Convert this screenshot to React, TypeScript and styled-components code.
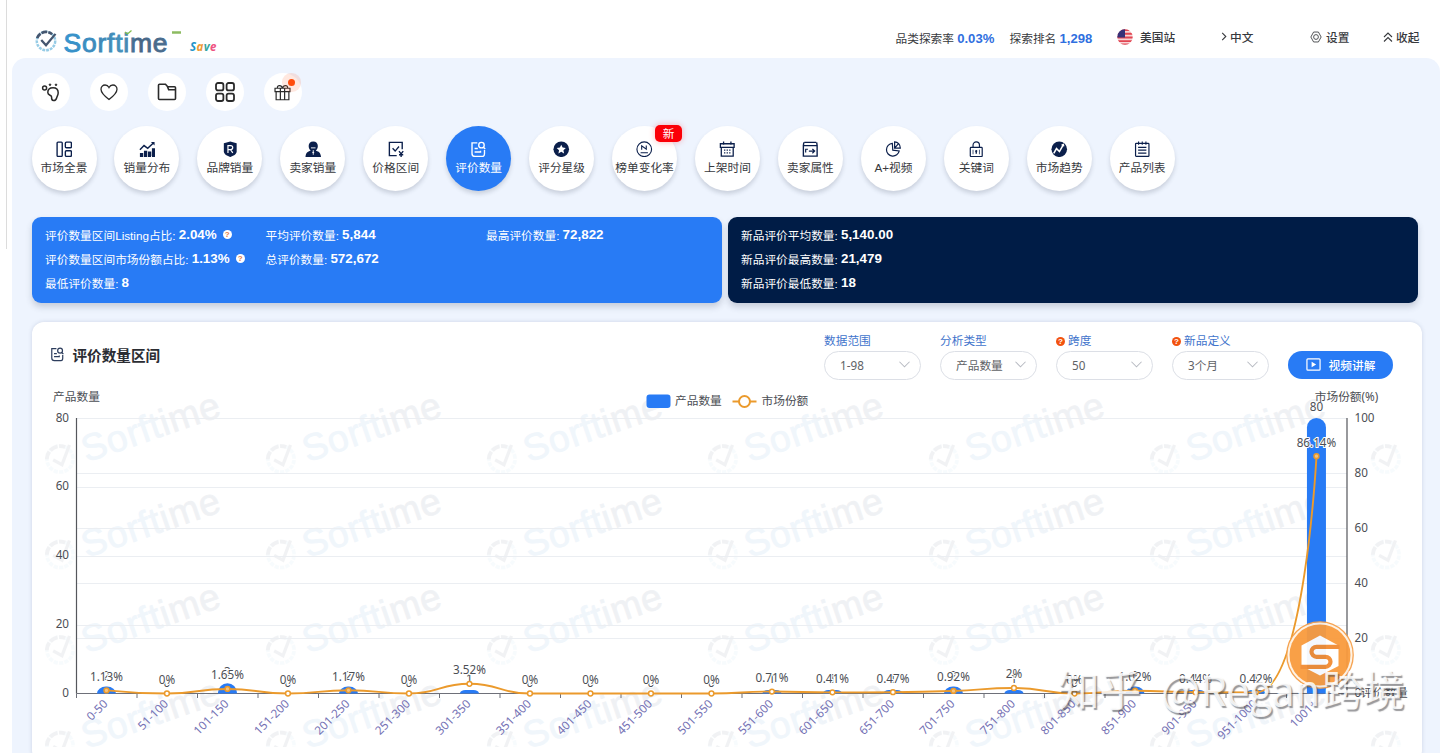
import React from "react";
import styled, { createGlobalStyle, css } from "styled-components";

const NAVY = "#0b1f4b";
const BLUE = "#287bf5";
const ORANGE = "#eb9a2c";
const CJK = `"Noto Sans CJK SC", sans-serif`;

/* ---------- icons ---------- */

type IconName =
  | "panorama"
  | "sales"
  | "brand"
  | "seller"
  | "price"
  | "review"
  | "star"
  | "change"
  | "calendar"
  | "store"
  | "pie"
  | "lock"
  | "trend"
  | "list";

const glyphs: Record<IconName, React.ReactNode> = {
  panorama: (
    <>
      <rect x="1.2" y="1.2" width="5.600" height="15.600" rx="1" />
      <rect x="10.200" y="1.200" width="6.600" height="6.200" rx="1.200" />
      <rect x="10.200" y="10.600" width="6.600" height="6.200" rx="1.200" />
    </>
  ),
  sales: (
    <>
      <path d="M1 9.500 5.500 5l4 3 6.500-6" strokeWidth="1.600" />
      <path d="M13 1h4v4z" fill="currentColor" stroke="none" />
      <path
        d="M1 13h3.600v4.500H1zM5.400 10.500h3.600v7H5.400zM9.800 11.500h3.600v6H9.800zM14.100 8h3.600v9.500h-3.600z"
        fill="currentColor"
        stroke="none"
      />
    </>
  ),
  brand: (
    <>
      <path
        d="M9 .5 2 2.500v9C2 14.500 6 16.500 9 17.500c3-1 7-3 7-6v-9z"
        fill="currentColor"
        stroke="none"
      />
      <path d="M6.500 13V5h3a2.200 2.200 0 0 1 0 4.400h-3M9.300 9.400 11.800 13" stroke="#fff" strokeWidth="1.300" />
    </>
  ),
  seller: (
    <>
      <path
        d="M9 .5c3.200 0 5 2 5 5 0 2.300-1 4-2.200 5 3.500.8 5.200 2 5.700 7H.5c.5-5 2.200-6.200 5.700-7C5 9.500 4 7.800 4 5.500c0-3 1.800-5 5-5z"
        fill="currentColor"
        stroke="none"
      />
      <path d="M6.500 7.500h5M9 10v5M8 12.500h2" stroke="#fff" strokeWidth="1" />
    </>
  ),
  price: (
    <>
      <path d="M9.500 16H1.500V1.500h14V9" />
      <path d="m5 8 2.800 3L12 6" />
      <path d="m12 11 2.300 3 2.300-3M14.300 14v4M12 15h4.600" />
    </>
  ),
  review: (
    <>
      <path d="M8 2H2.200v11.500c0 2 1.500 3.300 3.300 3.300h8.200c1.500 0 2.100-1 2.100-2.800V9.800" />
      <path d="M5 8.200h3.500M5 12h6.500v-1.500" />
      <circle cx="12.500" cy="4.500" r="3" />
      <path d="m14.600 6.800 2 2" />
    </>
  ),
  star: (
    <>
      <circle cx="9" cy="9" r="8.500" fill="currentColor" stroke="none" />
      <path
        d="m9 4 1.500 3.200 3.500.4-2.600 2.400.7 3.500L9 11.800l-3.100 1.700.7-3.500L4 7.600l3.500-.4z"
        fill="#fff"
        stroke="none"
      />
    </>
  ),
  change: (
    <>
      <circle cx="9" cy="9" r="8" strokeWidth="1.200" />
      <path d="M6.200 9.500V5.200l5 3.800V4.800M5 12.800h8" strokeWidth="1.200" />
    </>
  ),
  calendar: (
    <>
      <path d="M1.500 3h15v4h-15zM2.500 7v9.500h13V7M5 .5V4M13 .5V4" strokeWidth="1.400" />
      <path d="M5.500 10h1.400M8.300 10h1.400M11.100 10h1.400M5.500 13h1.400M8.300 13h1.400M11.100 13h1.400" />
    </>
  ),
  store: (
    <>
      <path d="M2.500 1.500h13M1.500 5h15v11.500h-15zM2 1.500 1.500 5M16 1.500l.5 3.500" />
      <path d="M3.500 9h3M4 9v3.500M7.500 11h6M11.300 8.700l2.500 2.300-2.500 2.300" strokeWidth="1.300" />
    </>
  ),
  pie: (
    <>
      <path d="M8 2.500a7 7 0 1 0 7.500 8.300L8.500 10z" strokeWidth="1.300" />
      <path d="M10.500 1v6.700h6.200C16.700 3.800 14 1 10.500 1zM10.500 7.700l4-4.500" strokeWidth="1.300" />
    </>
  ),
  lock: (
    <>
      <rect x="2.500" y="7" width="13" height="10" rx=".8" strokeWidth="1.300" />
      <path d="M5.500 7V4.500C5.500 2.500 7 1 9 1s3.500 1.500 3.500 3.500V7" strokeWidth="1.300" />
      <path d="M5.500 9.500v5M12.500 9.500v5" strokeWidth=".8" />
      <circle cx="9" cy="11" r="1.200" fill="currentColor" stroke="none" />
      <path d="M9 11v3" />
    </>
  ),
  trend: (
    <>
      <circle cx="9" cy="9" r="8.500" fill="currentColor" stroke="none" />
      <path d="m3 13.500 3-5.200 3.200 3.200 4-7M11.500 4.500l1.900-.6.400 2" stroke="#fff" strokeWidth="1.700" />
    </>
  ),
  list: (
    <>
      <rect x="1.700" y="2.500" width="14.600" height="14.300" rx=".8" strokeWidth="1.300" />
      <path d="M5 .5V4M9 .5V4M13 .5V4M4.500 7h9M4.500 10h9M4.500 13.200h9" strokeWidth="1.200" />
    </>
  ),
};

const Glyph = styled.svg<{ $size?: number }>`
  display: block;
  flex: none;
  width: ${({ $size }) => $size ?? 17}px;
  height: ${({ $size }) => $size ?? 17}px;
  fill: none;
  stroke: currentColor;
  stroke-width: 1.5;
`;

const Icon: React.FC<{ name: IconName; size?: number }> = ({ name, size }) => (
  <Glyph viewBox="0 0 18 18" $size={size}>
    {glyphs[name]}
  </Glyph>
);

/* ---------- data ---------- */

const navItems: { icon: IconName; label: string; active?: boolean; badge?: string }[] = [
  { icon: "panorama", label: "市场全景" },
  { icon: "sales", label: "销量分布" },
  { icon: "brand", label: "品牌销量" },
  { icon: "seller", label: "卖家销量" },
  { icon: "price", label: "价格区间" },
  { icon: "review", label: "评价数量", active: true },
  { icon: "star", label: "评分星级" },
  { icon: "change", label: "榜单变化率", badge: "新" },
  { icon: "calendar", label: "上架时间" },
  { icon: "store", label: "卖家属性" },
  { icon: "pie", label: "A+视频" },
  { icon: "lock", label: "关键词" },
  { icon: "trend", label: "市场趋势" },
  { icon: "list", label: "产品列表" },
];

const reviewStats = [
  { label: "评价数量区间Listing占比", value: "2.04%", help: true },
  { label: "平均评价数量", value: "5,844" },
  { label: "最高评价数量", value: "72,822" },
  { label: "评价数量区间市场份额占比", value: "1.13%", help: true },
  { label: "总评价数量", value: "572,672" },
  null,
  { label: "最低评价数量", value: "8" },
];

const newStats = [
  { label: "新品评价平均数量", value: "5,140.00" },
  { label: "新品评价最高数量", value: "21,479" },
  { label: "新品评价最低数量", value: "18" },
];

const filters = [
  { label: "数据范围", value: "1-98" },
  { label: "分析类型", value: "产品数量" },
  { label: "跨度", value: "50", help: true },
  { label: "新品定义", value: "3个月", help: true },
];

// [range, products, market share %]
const ranges: [string, number, number][] = [
  ["0-50", 2, 1.13],
  ["51-100", 0, 0],
  ["101-150", 3, 1.65],
  ["151-200", 0, 0],
  ["201-250", 2, 1.17],
  ["251-300", 0, 0],
  ["301-350", 1, 3.52],
  ["351-400", 0, 0],
  ["401-450", 0, 0],
  ["451-500", 0, 0],
  ["501-550", 0, 0],
  ["551-600", 1, 0.71],
  ["601-650", 1, 0.41],
  ["651-700", 1, 0.47],
  ["701-750", 2, 0.92],
  ["751-800", 1, 2],
  ["801-850", 0, 0],
  ["851-900", 2, 1.02],
  ["901-950", 1, 0.44],
  ["951-1000", 1, 0.42],
  ["1001+", 80, 86.14],
];

/* ---------- chart ---------- */

const LEFT = 76.5;
const RIGHT = 1347;
const TOP = 418;
const BOTTOM = 693.5;
const STEP = (RIGHT - LEFT) / ranges.length;

const xAt = (i: number) => LEFT + STEP * (i + 0.5) - 0.3;
const yCount = (v: number) => BOTTOM - (v / 80) * (BOTTOM - TOP);
const yShare = (v: number) => BOTTOM - (v / 100) * (BOTTOM - TOP);

type Pt = [number, number];

const between = (v: number, a: number, b: number) =>
  Math.max(Math.min(a, b), Math.min(Math.max(a, b), v));

// smooth curve whose control points never leave the neighbouring values
const smoothPath = (pts: Pt[]) => {
  const before: Pt[] = pts.map((p) => [...p] as Pt);
  const after: Pt[] = pts.map((p) => [...p] as Pt);
  for (let i = 1; i < pts.length - 1; i++) {
    const [p, c, n] = [pts[i - 1], pts[i], pts[i + 1]];
    const lp = Math.hypot(c[0] - p[0], c[1] - p[1]);
    const ln = Math.hypot(n[0] - c[0], n[1] - c[1]);
    const k = 0.5 * (ln / (lp + ln));
    for (const d of [0, 1]) {
      const next = between(c[d] + (n[d] - p[d]) * k, c[d], n[d]);
      before[i][d] = between(c[d] - ((next - c[d]) * lp) / ln, c[d], p[d]);
      after[i][d] = between(c[d] + ((c[d] - before[i][d]) * ln) / lp, c[d], n[d]);
    }
  }
  return pts
    .map((p, i) => (i ? `C${after[i - 1]} ${before[i]} ${p}` : `M${p}`))
    .join(" ");
};

const barPath = (x: number, v: number) => {
  const y = yCount(v);
  const h = BOTTOM - y;
  const ry = Math.min(9.5, h);
  const rx = Math.min(9.5, h + 2);
  return `M${x - 9.5} ${BOTTOM}V${y + ry}a${rx} ${ry} 0 0 1 ${rx} ${-ry}H${
    x + 9.5 - rx
  }a${rx} ${ry} 0 0 1 ${rx} ${ry}V${BOTTOM}z`;
};

const Mark: React.FC = () => (
  <>
    <circle r="9.700" fill="none" stroke="#5fb0d8" strokeWidth="2.600" strokeDasharray="3 1" opacity=".65" />
    <path d="M-9.300-3A10 10 0 0 1 6.500-7.200" fill="none" stroke="#45566f" strokeWidth="2.800" strokeDasharray="6 1.200" />
    <path d="M-5-1 0 4.500 10-7.500" fill="none" stroke="#45566f" strokeWidth="2.400" />
  </>
);

const Chart: React.FC = () => (
  <ChartSvg viewBox="32 386 1390 367">
    <defs>
      <clipPath id="wmArea">
        <rect x="45" y="390" width="1368" height="357" />
      </clipPath>
      <linearGradient id="wmInk" x1="0" x2="1">
        <stop offset="0" stopColor="#8fbce6" />
        <stop offset=".5" stopColor="#8fbce6" />
        <stop offset=".65" stopColor="#8d9bb0" />
      </linearGradient>
    </defs>

    <g clipPath="url(#wmArea)">
      {[0, 1, 2, 3].map((r) =>
        [0, 1, 2, 3, 4, 5, 6].map((c) => (
          <g
            key={`${r}-${c}`}
            transform={`translate(${60 + c * 221} ${459 + r * 95.5}) rotate(-19)`}
          >
            <g transform="scale(1.350)" opacity=".07">
              <Mark />
            </g>
            {c < 6 && (
              <text
                x="24"
                y="12"
                textLength="144"
                fontSize="37.500"
                fill="url(#wmInk)"
                stroke="url(#wmInk)"
                strokeWidth=".8"
                opacity=".13"
                fontFamily="Liberation Sans"
              >
                Sorftime
              </text>
            )}
          </g>
        ))
      )}
    </g>

    <g stroke="#ebeef2" strokeWidth="1">
      {[20, 40, 60, 80].map((v) => (
        <path key={v} d={`M${LEFT} ${Math.round(yCount(v)) + 0.5}H${RIGHT}`} />
      ))}
      {[20, 40, 60, 80].map((v) => (
        <path key={v} d={`M${LEFT} ${Math.round(yShare(v)) + 0.5}H${RIGHT}`} />
      ))}
    </g>

    <g stroke="#6e7079" fill="none">
      <path d={`M${LEFT} ${TOP}V${BOTTOM}M${RIGHT} ${TOP}V${BOTTOM}`} stroke="#55575c" strokeWidth="1.200" />
      <path d={`M${LEFT} ${BOTTOM}H${RIGHT}`} />
      {[...ranges, null].map((_, i) => (
        <path key={i} d={`M${LEFT + STEP * i} ${BOTTOM}v4.500`} />
      ))}
    </g>

    {ranges.map(([name, count], i) =>
      count ? <path key={name} d={barPath(xAt(i), count)} fill={BLUE} /> : null
    )}

    <g textAnchor="middle" stroke="#fff" strokeWidth="2" paintOrder="stroke">
      {ranges.map(([name, count], i) => (
        <text key={name} x={xAt(i)} y={yCount(count) - 7}>
          {count}
        </text>
      ))}
    </g>

    <path
      d={smoothPath(ranges.map(([, , share], i) => [xAt(i), yShare(share)] as Pt))}
      fill="none"
      stroke={ORANGE}
      strokeWidth="1.900"
    />
    {ranges.map(([name, count, share], i) => (
      <circle
        key={name}
        cx={xAt(i)}
        cy={yShare(share)}
        r="2.400"
        fill={count > 1 ? "#f3c27f" : "#fff"}
        stroke={ORANGE}
        strokeWidth="1.500"
      />
    ))}
    <g textAnchor="middle" stroke="#fff" strokeWidth="2" paintOrder="stroke">
      {ranges.map(([name, , share], i) => (
        <text key={name} x={xAt(i)} y={yShare(share) - 9.5}>
          {share}%
        </text>
      ))}
    </g>

    <g textAnchor="end">
      {[0, 20, 40, 60, 80].map((v) => (
        <text key={v} x="69" y={yCount(v) + 3.5}>
          {v}
        </text>
      ))}
    </g>
    {[0, 20, 40, 60, 80, 100].map((v) => (
      <text key={v} x="1354.500" y={yShare(v) + 3.5}>
        {v}
      </text>
    ))}
    <text x="76.500" y="401" textAnchor="middle">
      产品数量
    </text>
    <text x="1346.500" y="401" textAnchor="middle">
      市场份额(%)
    </text>
    <text x="1361" y="697">
      评价数量
    </text>

    <g textAnchor="end" fill="#7471b4">
      {ranges.map(([name], i) => (
        <text key={name} transform={`translate(${xAt(i) + 2} 704.500) rotate(-45)`}>
          {name}
        </text>
      ))}
    </g>

    <rect x="646.500" y="394.500" width="24" height="13.500" rx="3" fill={BLUE} />
    <text x="675" y="405">
      产品数量
    </text>
    <path d="M732.500 401.500h24" stroke={ORANGE} strokeWidth="2" />
    <circle cx="744.500" cy="401.500" r="5.500" fill="#fff" stroke={ORANGE} strokeWidth="2" />
    <text x="761.500" y="405">
      市场份额
    </text>
  </ChartSvg>
);

const ChartSvg = styled.svg`
  display: block;
  width: 1390px;
  height: 367px;
  font-family: "Noto Sans", ${CJK};
  font-size: 11.7px;
  fill: #4b4e54;
`;

/* ---------- header ---------- */

const Header: React.FC = () => (
  <HeaderBar>
    <Logo viewBox="0 0 190 40">
      <defs>
        <linearGradient id="ink" x1="0" x2="1">
          <stop offset="0" stopColor="#3595cf" />
          <stop offset=".35" stopColor="#3f88b8" />
          <stop offset=".58" stopColor="#4693bd" />
          <stop offset=".7" stopColor="#456585" />
          <stop offset="1" stopColor="#4a6e90" />
        </linearGradient>
      </defs>
      <g transform="translate(11 21) scale(.95)">
        <Mark />
      </g>
      <text
        x="28.500"
        y="31.500"
        textLength="104"
        fontSize="26.500"
        fill="url(#ink)"
        stroke="url(#ink)"
        strokeWidth=".9"
        fontFamily="Liberation Sans"
      >
        Sorftime
      </text>
      <path d="m90 12 2.500 2 4-3.500" fill="none" stroke="#84bd4c" strokeWidth="1.300" />
      <path d="M137 12.500h9" stroke="#8cbb61" strokeWidth="2.500" />
      <text x="155" y="31" textLength="26.500" fontSize="11.500" fontWeight="700" fontStyle="italic" fontFamily="Noto Sans">
        <tspan fill="#2194c9">S</tspan>
        <tspan fill="#ef9a36">a</tspan>
        <tspan fill="#35a6a0">v</tspan>
        <tspan fill="#ee5382">e</tspan>
      </text>
    </Logo>
    <HeaderTools>
      <Exploration>
        品类探索率 <Metric>0.03%</Metric>
      </Exploration>
      <Exploration>
        探索排名 <Metric>1,298</Metric>
      </Exploration>
      <Tool $gap={7}>
        <Glyph viewBox="0 0 16 16" $size={16}>
          <clipPath id="flag">
            <circle cx="8" cy="8" r="7.700" />
          </clipPath>
          <g clipPath="url(#flag)" stroke="none">
            <path d="M0 0h16v16H0z" fill="#f6d5d7" />
            <path d="M0 0h16v2H0zM0 3.800h16v1.900H0zM0 7.500h16v1.900H0zM0 11.200h16v1.800H0zM0 14.500h16V16H0z" fill="#e24552" />
            <path d="M0 0h8v8.500H0z" fill="#363078" />
          </g>
        </Glyph>
        美国站
      </Tool>
      <Tool $gap={3}>
        <Caret viewBox="0 0 6 10">
          <path d="m1 1 4 4-4 4" />
        </Caret>
        中文
      </Tool>
      <Tool $gap={4}>
        <Glyph viewBox="0 0 14 14" $size={12}>
          <path d="M4.200 1.200h5.600L13 7l-3.200 5.800H4.200L1 7z" strokeWidth="1" />
          <circle cx="7" cy="7" r="2.800" strokeWidth="1" />
        </Glyph>
        设置
      </Tool>
      <Tool $gap={3}>
        <Glyph viewBox="0 0 10 10" $size={10}>
          <path d="m1 5 4-4 4 4M1 9.500l4-4 4 4" strokeWidth="1.100" />
        </Glyph>
        收起
      </Tool>
    </HeaderTools>
  </HeaderBar>
);

const Chevron: React.FC = () => (
  <Glyph viewBox="0 0 12 12" $size={11}>
    <path d="m.5 3 5.500 5.500L11.500 3" stroke="#b7bac2" strokeWidth="1.100" />
  </Glyph>
);

/* ---------- page ---------- */

const App: React.FC = () => (
  <>
    <GlobalStyle />
    <Page>
      <Rail />
      <Main>
        <Header />
        <Content>
          <QuickRow>
            <QuickButton>
              <Glyph viewBox="0 0 20 20" $size={20}>
                <circle cx="3.600" cy="6" r="2" />
                <circle cx="9" cy="2.700" r=".8" fill="currentColor" strokeWidth="1" />
                <circle cx="15" cy="2.800" r=".8" fill="currentColor" strokeWidth="1" />
                <path d="M6.800 10.500c0-3 2.200-4.800 5.200-4.800 3.300 0 5.200 2 5.200 5 0 2.500-1 3.300-1.500 5-.5 1.800-1.500 3-3.300 2.800-2.200-.3-1.800-2.200-1.800-3.600 0-2-3.800-1.400-3.800-4.400z" />
              </Glyph>
            </QuickButton>
            <QuickButton>
              <Glyph viewBox="0 0 20 20" $size={20}>
                <path d="M10 17.500C6 14.500 2 11 2 7.300 2 4.700 3.900 3 6.100 3 7.700 3 9.200 4 10 5.500 10.800 4 12.300 3 13.900 3 16.100 3 18 4.700 18 7.300c0 3.700-4 7.200-8 10.200z" strokeWidth="1.300" />
              </Glyph>
            </QuickButton>
            <QuickButton>
              <Glyph viewBox="0 0 20 20" $size={20}>
                <path d="M1.500 3.200c0-.6.400-1 1-1h6l2.200 2.600h6.800c.6 0 1 .4 1 1v10.700c0 .6-.4 1-1 1h-15c-.6 0-1-.4-1-1zM10.500 4.800l1.200 3h6.500" strokeWidth="1.600" />
              </Glyph>
            </QuickButton>
            <QuickButton>
              <Glyph viewBox="0 0 20 20" $size={20}>
                <g strokeWidth="1.800">
                  <rect x="1" y="1" width="7.400" height="7.400" rx="2" />
                  <rect x="11.600" y="1" width="7.400" height="7.400" rx="2" />
                  <rect x="1" y="11.600" width="7.400" height="7.400" rx="2" />
                  <rect x="11.600" y="11.600" width="7.400" height="7.400" rx="2" />
                </g>
              </Glyph>
            </QuickButton>
            <QuickButton>
              <Glyph viewBox="0 0 20 20" $size={17}>
                <path d="M1.200 5h17.600v4H1.200zM2.500 9v9.500h15V9M7.500 5v13.500M12.500 5v13.500M10 5C9 1 3.500.5 4 5M10 5c1-4 6.500-4.500 6 0" strokeWidth="1.400" />
              </Glyph>
              <Dot />
            </QuickButton>
          </QuickRow>

          <NavRow>
            {navItems.map((item) => (
              <NavItem key={item.label} $active={item.active}>
                <Icon name={item.icon} size={16.5} />
                {item.label}
                {item.badge && <NewBadge>{item.badge}</NewBadge>}
              </NavItem>
            ))}
          </NavRow>

          <StatsRow>
            <StatsPanel $color={BLUE} $columns={3}>
              {reviewStats.map((stat, i) => (
                <Stat key={i}>
                  {stat && (
                    <>
                      {stat.label}: <b>{stat.value}</b>
                      {stat.help && <Help $light>?</Help>}
                    </>
                  )}
                </Stat>
              ))}
            </StatsPanel>
            <StatsPanel $color="#001c46" $columns={1}>
              {newStats.map((stat) => (
                <Stat key={stat.label}>
                  {stat.label}: <b>{stat.value}</b>
                </Stat>
              ))}
            </StatsPanel>
          </StatsRow>

          <Card>
            <CardHeader>
              <CardTitle>
                <Icon name="review" size={14.5} />
                评价数量区间
              </CardTitle>
              <Filters>
                {filters.map((filter) => (
                  <Filter key={filter.label}>
                    <FilterLabel>
                      {filter.help && <Help>?</Help>}
                      {filter.label}
                    </FilterLabel>
                    <SelectBox>
                      {filter.value}
                      <Chevron />
                    </SelectBox>
                  </Filter>
                ))}
                <VideoButton>
                  <Glyph viewBox="0 0 16 14" $size={15}>
                    <rect x="1" y="1" width="14" height="12" rx="1" strokeWidth="1.300" />
                    <path d="m6 4 4.800 3L6 10z" fill="#fff" stroke="none" />
                  </Glyph>
                  视频讲解
                </VideoButton>
              </Filters>
            </CardHeader>
            <Chart />
          </Card>
        </Content>
      </Main>

      <FloatingLogo viewBox="-36 -36 72 72">
        <circle r="33.200" fill="#fff3e4" stroke="#f6a04b" strokeWidth="1.300" />
        <circle r="30.500" fill="#f99b3e" />
        <path d="M0-19.500 18.500-9.500v20.500L0 20.500-18.500 11V-9.500z" fill="#fff" />
        <path
          d="M19.500-8.200H-3.500a5 5 0 0 0 0 10H5.500a5 5 0 0 1 0 10H-19.500"
          fill="none"
          stroke="#f28c33"
          strokeWidth="4.200"
        />
      </FloatingLogo>
      <Watermark>
        <span>知乎</span>
        <span>@Regan</span>
        <span>跨境</span>
      </Watermark>
    </Page>
  </>
);

const GlobalStyle = createGlobalStyle`
  body {
    margin: 0;
    overflow: hidden;
    background: #fff;
  }

  * {
    box-sizing: border-box;
  }
`;

const Page = styled.div`
  position: relative;
  display: flex;
  width: 1440px;
  height: 753px;
  overflow: hidden;
  font-family: "Liberation Sans", ${CJK};
  font-size: 11.7px;
  color: #37393d;
`;

const Rail = styled.div`
  width: 7px;
  height: 249px;
  margin-right: 5px;
  border-right: 1px solid #dcdcdc;
`;

const Main = styled.div`
  flex: 1;
  display: flex;
  flex-direction: column;
`;

const HeaderBar = styled.header`
  display: flex;
  justify-content: space-between;
  height: 58px;
  padding: 20px 0 0 23px;
`;

const Logo = styled.svg`
  width: 190px;
  height: 40px;
`;

const HeaderTools = styled.div`
  display: grid;
  grid-template-columns: 114px 107px 104px 89px 73px 57px;
  height: 33px;
  align-items: center;
  white-space: nowrap;
`;

const Exploration = styled.span`
  margin-left: -0.5px;
  padding-top: 1px;
`;

const Metric = styled.b`
  font-size: 13.1px;
  color: #2f6fe0;
`;

const Tool = styled.div<{ $gap: number }>`
  display: flex;
  align-items: center;
  gap: ${({ $gap }) => $gap}px;
  font-weight: 500;
`;

const Caret = styled.svg`
  width: 6px;
  height: 9px;
  fill: none;
  stroke: currentColor;
  stroke-width: 1.2;
`;

const Content = styled.main`
  flex: 1;
  padding: 15px 18px 0 20px;
  background: #eef4fe;
  border-radius: 14px 14px 0 0;
`;

const QuickRow = styled.div`
  display: flex;
  gap: 20px;
  margin-left: -0.5px;
`;

const QuickButton = styled.div`
  position: relative;
  display: flex;
  align-items: center;
  justify-content: center;
  width: 38px;
  height: 38px;
  border-radius: 50%;
  background: #fff;
  color: #2a2a2a;
`;

const Dot = styled.span`
  position: absolute;
  top: 6px;
  left: 24px;
  width: 7px;
  height: 7px;
  border-radius: 50%;
  background: #ff4d0d;
  box-shadow: 0 0 0 6px rgba(255, 100, 50, 0.15);
`;

const NavRow = styled.nav`
  display: flex;
  gap: 17.95px;
  margin: 15px 0 0 -0.5px;
`;

const NavItem = styled.div<{ $active?: boolean }>`
  position: relative;
  display: flex;
  flex-direction: column;
  align-items: center;
  gap: 2px;
  width: 65px;
  height: 65px;
  padding-top: 14.5px;
  border-radius: 50%;
  background: #fff;
  box-shadow: 0 3px 4px rgba(60, 70, 90, 0.2);
  line-height: 17px;
  white-space: nowrap;

  svg {
    color: ${NAVY};
  }

  ${({ $active }) =>
    $active &&
    css`
      background: ${BLUE};
      color: #fff;

      svg {
        color: #fff;
      }
    `}
`;

const NewBadge = styled.span`
  position: absolute;
  top: -1px;
  left: 43px;
  width: 27px;
  height: 17px;
  border-radius: 5px;
  background: #fb0007;
  box-shadow: 0 0 6px rgba(255, 0, 0, 0.3);
  color: #fff;
  text-align: center;
`;

const StatsRow = styled.div`
  display: flex;
  gap: 6px;
  margin-top: 26px;
`;

const StatsPanel = styled.section<{ $color: string; $columns: number }>`
  display: grid;
  grid-template-columns: repeat(${({ $columns }) => $columns}, 220.5px);
  grid-auto-rows: 23.7px;
  width: 690px;
  height: 86px;
  padding: 6px 13px;
  border-radius: 9px;
  background: ${({ $color }) => $color};
  box-shadow: 0 4px 6px rgba(60, 70, 90, 0.22);
  color: #fff;
`;

const Stat = styled.div`
  display: flex;
  align-items: center;
  white-space: nowrap;

  b {
    margin-left: 3.2px;
    font-size: 13.4px;
  }
`;

const Help = styled.span<{ $light?: boolean }>`
  display: inline-flex;
  align-items: center;
  justify-content: center;
  width: 9px;
  height: 9px;
  margin: ${({ $light }) => ($light ? "0 0 0 6px" : "0 3px 0 0")};
  border-radius: 50%;
  background: ${({ $light }) => ($light ? "#fff" : "#f2520f")};
  color: ${({ $light }) => ($light ? "#e07a45" : "#fff")};
  font-size: 8px;
  font-weight: 700;
  line-height: 9px;
`;

const Card = styled.section`
  width: 1390px;
  height: 440px;
  margin-top: 19px;
  border-radius: 12px;
  background: #fff;
  box-shadow: 0 0 4px rgba(60, 80, 120, 0.18);
`;

const CardHeader = styled.div`
  display: flex;
  justify-content: space-between;
  height: 64px;
  padding: 9px 29px 0 18px;
`;

const CardTitle = styled.h2`
  display: flex;
  align-items: center;
  gap: 8px;
  height: 47px;
  margin: 0;
  font-size: 14.6px;
  font-weight: 700;
  color: #2b2d33;

  svg {
    color: #2d3d5d;
  }
`;

const Filters = styled.div`
  display: flex;
  align-items: flex-start;
  gap: 19px;
`;

const Filter = styled.div`
  width: 97px;
`;

const FilterLabel = styled.div`
  display: flex;
  align-items: center;
  height: 20px;
  line-height: 20px;
  color: #3f74cc;
`;

const SelectBox = styled.div`
  display: flex;
  align-items: center;
  justify-content: space-between;
  height: 29px;
  padding: 0 10px 2px 15px;
  border: 1px solid #dcdfe6;
  border-radius: 15px;
  font-family: "Noto Sans", ${CJK};
  color: #606266;
`;

const VideoButton = styled.button`
  display: flex;
  align-items: center;
  justify-content: center;
  gap: 8px;
  width: 105px;
  height: 28px;
  margin-top: 20px;
  padding: 0 0 2px;
  border: 0;
  border-radius: 14px;
  background: ${BLUE};
  color: #fff;
  font: 500 11.7px ${CJK};
`;

const FloatingLogo = styled.svg`
  position: absolute;
  top: 619px;
  left: 1284px;
  width: 72px;
  height: 72px;
  opacity: 0.95;
`;

const Watermark = styled.div`
  position: absolute;
  top: 659px;
  left: 1058px;
  display: grid;
  grid-template-columns: 103px 161px 84px;
  font: 400 41.5px/58px ${CJK};
  white-space: nowrap;
  color: rgba(255, 255, 255, 0.85);
  text-shadow: 1.5px 2px 1px rgba(70, 70, 75, 0.55);
`;

export default App;
